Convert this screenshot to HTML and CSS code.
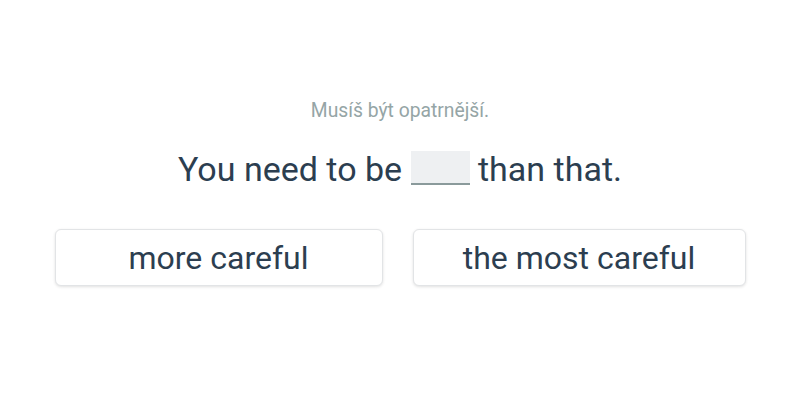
FILE: index.html
```html
<!DOCTYPE html>
<html lang="cs">
<head>
<meta charset="utf-8">
<link rel="stylesheet" href="styles.css">
</head>
<body>
<main class="exercise">
  <p class="hint">Musíš být opatrnější.</p>
  <p class="sentence">You need to be <span class="blank"></span> than that.</p>
  <div class="options">
    <button class="option opt-a">more careful</button>
    <button class="option opt-b">the most careful</button>
  </div>
</main>
</body>
</html>
```
FILE: styles.css
```css
html, body {
  margin: 0;
  padding: 0;
  background: #ffffff;
}
body {
  font-family: Roboto, "Noto Sans", sans-serif;
  width: 800px;
  height: 400px;
}
.exercise {
  display: flex;
  flex-direction: column;
  align-items: center;
  padding-top: 99px;
}
.hint {
  margin: 0;
  font-size: 19.3px;
  line-height: 24px;
  color: #95a5a6;
}
.sentence {
  margin: 22px 0 0;
  font-size: 34px;
  line-height: 48px;
  color: #2c3e50;
}
.blank {
  display: inline-block;
  width: 59px;
  height: 32px;
  background: #eef0f2;
  border-bottom: 2px solid #8a9a9b;
  vertical-align: -4px;
}
.options {
  display: flex;
  gap: 30px;
  margin-top: 36px;
}
.option {
  height: 57px;
  background: #fff;
  border: 1px solid #e2e4e6;
  border-radius: 6px;
  box-shadow: 0 1px 3px rgba(0,0,0,0.12);
  font-family: Roboto, "Noto Sans", sans-serif;
  font-size: 32px;
  color: #2c3e50;
  padding: 0;
}
.opt-a { width: 328px; }
.opt-b { width: 333px; }
```
